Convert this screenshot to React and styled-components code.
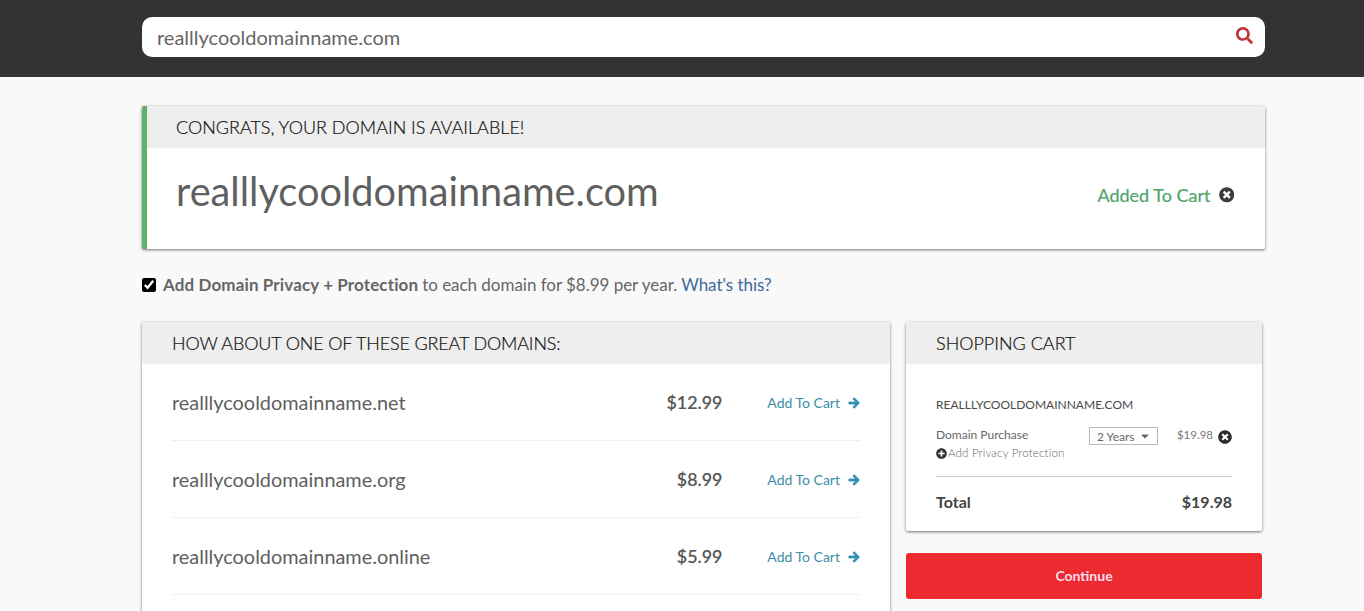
import React from "react";
import styled, { createGlobalStyle } from "styled-components";
import { FaSearch, FaTimesCircle, FaPlusCircle, FaArrowRight, FaCaretDown } from "react-icons/fa";

const GlobalStyle = createGlobalStyle`
  html, body {
    margin: 0;
    padding: 0;
    height: 100%;
    overflow: hidden;
    background: #f9f9f9;
    font-family: Lato, "Liberation Sans", sans-serif;
    color: #555;
  }
`;

const Page = styled.div`
  height: 611px;
  overflow: hidden;
`;

const TopBar = styled.header`
  background: #333;
  height: 77px;
  box-sizing: border-box;
  padding: 17px 99px 0 142px;
`;

const SearchBox = styled.div`
  height: 40px;
  background: #fff;
  border-radius: 10px;
  display: flex;
  align-items: center;
  justify-content: space-between;
  padding: 0 12px 0 15px;
  font-size: 20px;
  color: #666;
  svg {
    color: #c0363a;
    font-size: 17px;
    margin-top: -3px;
  }
`;

const Main = styled.main`
  padding: 29px 99px 0 142px;
`;

const Card = styled.section`
  background: #fff;
  border-radius: 2px;
  box-shadow: 0 1px 3px rgba(0, 0, 0, 0.55);
`;

const Banner = styled(Card)`
  border-left: 5px solid #5fb368;
  height: 143px;
`;

const CardHead = styled.h2`
  margin: 0;
  height: 42px;
  display: flex;
  align-items: center;
  background: #eee;
  font-weight: 300;
  font-size: 18px;
  color: #111;
  -webkit-text-stroke: 0.2px #111;
  letter-spacing: ${(p) => p.$tight || 0}px;
  padding-left: ${(p) => p.$pad}px;
`;

const BannerBody = styled.div`
  height: 101px;
  box-sizing: border-box;
  display: flex;
  justify-content: space-between;
  padding: 19px 31px 0 29px;
`;

const BigDomain = styled.div`
  font-size: 39.7px;
  line-height: 48px;
  color: #5f5f5f;
`;

const Added = styled.div`
  display: flex;
  align-items: center;
  gap: 8px;
  height: 56px;
  font-size: 18px;
  color: #4ea56c;
  -webkit-text-stroke: 0.2px #4ea56c;
  svg {
    color: #3d3d3d;
    font-size: 15.5px;
  }
`;

const PrivacyRow = styled.label`
  display: flex;
  align-items: center;
  gap: 7px;
  height: 71px;
  margin-bottom: 2px;
  font-size: 17px;
  letter-spacing: -0.03px;
  color: #666;
  b {
    font-weight: 700;
    letter-spacing: 0.12px;
    margin-right: 4px;
  }
  a {
    color: #3b6a9c;
    margin-left: 4px;
  }
`;

const Tick = styled.input`
  margin: 0;
  width: 14px;
  height: 14px;
  accent-color: #000;
`;

const Columns = styled.div`
  display: grid;
  grid-template-columns: 748px 356px;
  column-gap: 16px;
  align-items: start;
`;

const DomainList = styled.div`
  padding: 0 30px 60px;
`;

const DomainRow = styled.div`
  height: 77px;
  box-sizing: border-box;
  display: flex;
  align-items: center;
  border-bottom: 1px solid #efefef;
`;

const DomainName = styled.span`
  flex: 1;
  font-size: 19.9px;
  color: #606060;
`;

const Price = styled.span`
  font-size: 17.8px;
  font-weight: 500;
  -webkit-text-stroke: 0.2px #555;
  color: #555;
  margin-right: 45px;
`;

const AddLink = styled.a`
  display: flex;
  align-items: center;
  gap: 8px;
  font-size: 14px;
  color: #3a8ea8;
  svg {
    font-size: 12px;
    margin-top: 1px;
    color: #2d8fb0;
    stroke: currentColor;
    stroke-width: 40;
  }
`;

const Side = styled.aside`
  display: flex;
  flex-direction: column;
  gap: 22px;
`;

const CartBody = styled.div`
  padding: 34px 30px 19px 30px;
`;

const CartDomain = styled.div`
  font-size: 12px;
  line-height: 14px;
  color: #4a4a4a;
  margin-bottom: 14px;
`;

const CartLine = styled.div`
  display: flex;
  align-items: flex-start;
  font-size: 12px;
  color: #666;
`;

const CartInfo = styled.div`
  flex: 1;
  line-height: 18px;
`;

const AddPrivacy = styled.div`
  display: flex;
  align-items: center;
  gap: 1px;
  font-size: 11.5px;
  font-weight: 300;
  color: #666;
  letter-spacing: 0.17px;
  svg {
    color: #333;
    font-size: 11px;
  }
`;

const Years = styled.div`
  width: 69px;
  height: 18px;
  margin-top: 1px;
  box-sizing: border-box;
  border: 1px solid #bbb;
  display: flex;
  align-items: center;
  justify-content: space-between;
  padding: 0 6px 0 7px;
  font-size: 12px;
  color: #666;
  margin-right: 19px;
  svg {
    font-size: 12px;
  }
`;

const LinePrice = styled.div`
  display: flex;
  align-items: center;
  gap: 5px;
  font-size: 11.5px;
  line-height: 16px;
  color: #777;
  svg {
    color: #2b2b2b;
    font-size: 14px;
    margin-top: 4px;
  }
`;

const Total = styled.div`
  display: flex;
  justify-content: space-between;
  align-items: center;
  border-top: 1px solid #ccc;
  margin-top: 14px;
  padding-top: 15px;
  font-size: 16px;
  line-height: 20px;
  font-weight: 700;
  color: #444;
`;

const Continue = styled.button`
  height: 46px;
  border: 0;
  padding: 0 0 1px;
  border-radius: 3px;
  background: #ec2b30;
  color: #fde;
  font-family: inherit;
  font-size: 14px;
  font-weight: 700;
`;

const domains = [
  { name: "realllycooldomainname.net", price: "$12.99" },
  { name: "realllycooldomainname.org", price: "$8.99" },
  { name: "realllycooldomainname.online", price: "$5.99" },
];

export default function App() {
  return (
    <Page>
      <GlobalStyle />
      <TopBar>
        <SearchBox>
          realllycooldomainname.com
          <FaSearch />
        </SearchBox>
      </TopBar>
      <Main>
        <Banner>
          <CardHead $pad={29}>CONGRATS, YOUR DOMAIN IS AVAILABLE!</CardHead>
          <BannerBody>
            <BigDomain>realllycooldomainname.com</BigDomain>
            <Added>
              Added To Cart <FaTimesCircle />
            </Added>
          </BannerBody>
        </Banner>
        <PrivacyRow>
          <Tick type="checkbox" defaultChecked />
          <span>
            <b>Add Domain Privacy + Protection</b>to each domain for $8.99 per year.
            <a>What's this?</a>
          </span>
        </PrivacyRow>
        <Columns>
          <Card>
            <CardHead $pad={30} $tight={-0.16}>HOW ABOUT ONE OF THESE GREAT DOMAINS:</CardHead>
            <DomainList>
              {domains.map((d) => (
                <DomainRow key={d.name}>
                  <DomainName>{d.name}</DomainName>
                  <Price>{d.price}</Price>
                  <AddLink>
                    Add To Cart <FaArrowRight />
                  </AddLink>
                </DomainRow>
              ))}
            </DomainList>
          </Card>
          <Side>
            <Card>
              <CardHead $pad={30}>SHOPPING CART</CardHead>
              <CartBody>
                <CartDomain>REALLLYCOOLDOMAINNAME.COM</CartDomain>
                <CartLine>
                  <CartInfo>
                    Domain Purchase
                    <AddPrivacy>
                      <FaPlusCircle /> Add Privacy Protection
                    </AddPrivacy>
                  </CartInfo>
                  <Years>
                    2 Years <FaCaretDown />
                  </Years>
                  <LinePrice>
                    $19.98 <FaTimesCircle />
                  </LinePrice>
                </CartLine>
                <Total>
                  <span>Total</span>
                  <span>$19.98</span>
                </Total>
              </CartBody>
            </Card>
            <Continue>Continue</Continue>
          </Side>
        </Columns>
      </Main>
    </Page>
  );
}
